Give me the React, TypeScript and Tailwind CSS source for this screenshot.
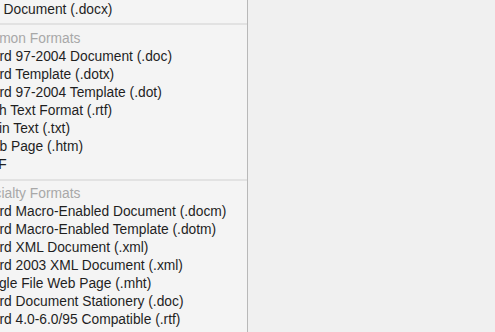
import React from 'react';

const common = [
  'Word 97-2004 Document (.doc)',
  'Word Template (.dotx)',
  'Word 97-2004 Template (.dot)',
  'Rich Text Format (.rtf)',
  'Plain Text (.txt)',
  'Web Page (.htm)',
  'PDF',
];

const specialty = [
  'Word Macro-Enabled Document (.docm)',
  'Word Macro-Enabled Template (.dotm)',
  'Word XML Document (.xml)',
  'Word 2003 XML Document (.xml)',
  'Single File Web Page (.mht)',
  'Word Document Stationery (.doc)',
  'Word 4.0-6.0/95 Compatible (.rtf)',
];

function Item({ label }: { label: string }) {
  return <div className="h-[18px] leading-[18px] pl-[12px] whitespace-nowrap text-[#1f1f1f]">{label}</div>;
}

function Header({ label }: { label: string }) {
  return <div className="h-[18px] leading-[18px] pl-[3px] whitespace-nowrap text-[#a8a8a8]">{label}</div>;
}

export default function App() {
  return (
    <div
      className="flex w-[495px] h-[332px] overflow-hidden bg-[#f0f0f0] text-[13.8px]"
      style={{ fontFamily: '"Liberation Sans", Arial, sans-serif' }}
    >
      <div className="w-[248px] h-full shrink-0 overflow-hidden bg-[#f4f4f4] border-r border-[#b8b8b8]">
        <div className="-ml-[33px] pt-px flex flex-col">
          <div className="h-[18px] leading-[18px] whitespace-nowrap text-[#1f1f1f]">Word Document (.docx)</div>
          <div className="mt-[4px] mb-[5px] h-[2px] bg-[#e2e2e2] ml-[33px]" />
          <Header label="Common Formats" />
          {common.map((l) => (
            <Item key={l} label={l} />
          ))}
          <div className="mt-[5px] mb-[4px] h-[2px] bg-[#e2e2e2] ml-[33px]" />
          <Header label="Specialty Formats" />
          {specialty.map((l) => (
            <Item key={l} label={l} />
          ))}
        </div>
      </div>
      <div className="flex-1" />
    </div>
  );
}
